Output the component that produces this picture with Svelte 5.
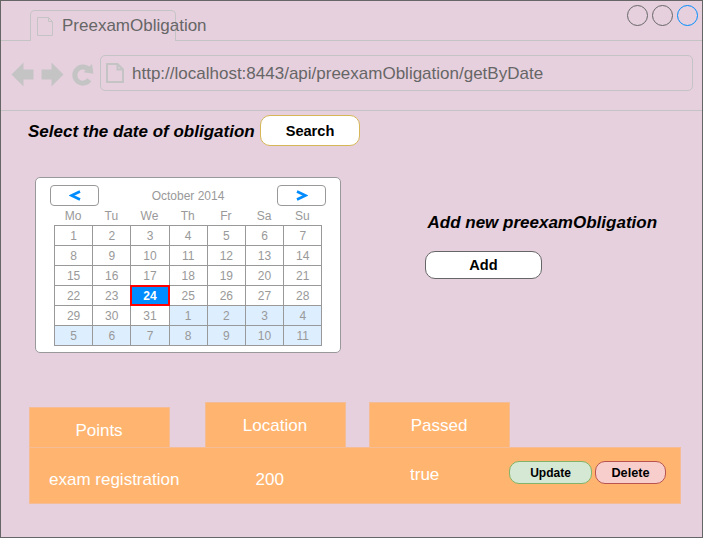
<script>
  const weekdays = ['Mo', 'Tu', 'We', 'Th', 'Fr', 'Sa', 'Su'];
  const days = Array.from({ length: 42 }, (_, i) => ({
    label: i < 31 ? i + 1 : i - 30,
    next: i >= 31,
    selected: i === 23
  }));
</script>

<div class="window">
  <header class="tabs">
    <div class="lead"></div>
    <div class="tab">
      <svg class="tab-icon" width="18" height="20" viewBox="0 0 18 20">
        <path d="M1.5 1.5H12.5L16.5 5.5V19.5H1.5ZM12.5 1.5V5.5H16.5" />
      </svg>
      <span>PreexamObligation</span>
    </div>
    <div class="controls">
      <i></i><i></i><i class="blue"></i>
    </div>
  </header>

  <nav class="toolbar">
    <svg class="nav-icons" width="99" height="36" viewBox="0 0 99 36">
      <path d="M10.5 19.5L22.5 7.5V14.5H32.5V24.5H22.5V31.5Z" />
      <path d="M62.5 19.5L50.5 7.5V14.5H40.5V24.5H50.5V31.5Z" />
      <path class="reload" d="M87.6 14.6A8 8 0 1 0 88.3 24.8" />
      <path d="M91 9L92.500 18.800L82.500 17.300Z" />
    </svg>
    <div class="address">
      <svg width="20" height="22" viewBox="0 0 20 22">
        <path d="M2 2H12.5L18 7.5V20H2ZM12.5 2V7.5H18" />
      </svg>
      <span>http://localhost:8443/api/preexamObligation/getByDate</span>
    </div>
  </nav>

  <main>
    <div class="search-row">
      <span class="heading">Select the date of obligation</span>
      <button class="search">Search</button>
    </div>

    <div class="middle">
      <section class="calendar">
        <div class="month">
          <button><svg width="12" height="12" viewBox="0 0 12 12"><path d="M11 1.5L2.5 5.5L11 9.5" /></svg></button>
          <span>October 2014</span>
          <button><svg width="12" height="12" viewBox="0 0 12 12"><path d="M1 1.5L9.5 5.5L1 9.5" /></svg></button>
        </div>
        <div class="weekdays">
          {#each weekdays as day}<span>{day}</span>{/each}
        </div>
        <div class="days">
          {#each days as day}
            <span class:next={day.next} class:selected={day.selected}>{day.label}</span>
          {/each}
        </div>
      </section>

      <section class="add">
        <span class="heading">Add new preexamObligation</span>
        <button>Add</button>
      </section>
    </div>

    <section class="table">
      <div class="heads">
        <div class="head points">Points</div>
        <div class="head location">Location</div>
        <div class="head passed">Passed</div>
      </div>
      <div class="record">
        <span class="name">exam registration</span>
        <span class="place">200</span>
        <span class="state">true</span>
        <button class="update">Update</button>
        <button class="delete">Delete</button>
      </div>
    </section>
  </main>
</div>

<style>
  .window {
    box-sizing: border-box;
    width: 703px;
    height: 538px;
    border: 1px solid #666;
    background: #e6d0de;
    font-family: "Liberation Sans", Arial, sans-serif;
    font-size: 17px;
    overflow: hidden;
    white-space: nowrap;
  }
  .window * { box-sizing: border-box; }
  svg { display: block; flex: none; }
  button {
    font-family: inherit;
    font-weight: bold;
    font-size: 14.6px;
    padding: 0;
    color: #000;
    background: #fff;
    border: 1px solid #666;
    border-radius: 10px;
    display: flex;
    align-items: center;
    justify-content: center;
    flex: none;
  }
  .tabs { display: flex; height: 40px; }
  .lead { width: 29px; border-bottom: 1px solid #c4c4c4; }
  .tab {
    display: flex;
    width: 146px;
    margin-top: 9px;
    border: 1px solid #c4c4c4;
    border-bottom: 0;
    border-radius: 5px 5px 0 0;
    color: #666;
    line-height: 30px;
  }
  .tab-icon { margin: 5px 8px 0 5px; }
  .tab-icon path { fill: none; stroke: #c4c4c4; }
  .controls {
    flex: 1;
    display: flex;
    justify-content: flex-end;
    gap: 4px;
    padding: 4px 4px 0 0;
    border-bottom: 1px solid #c4c4c4;
  }
  .controls i { width: 21px; height: 21px; border: 1px solid #666; border-radius: 50%; }
  .controls .blue { border-color: #008cff; }

  .toolbar { display: flex; height: 70px; padding-top: 14px; border-bottom: 1px solid #c4c4c4; }
  .nav-icons path { fill: #c4c4c4; }
  .nav-icons .reload { fill: none; stroke: #c4c4c4; stroke-width: 5; }
  .address {
    display: flex;
    width: 593px;
    height: 36px;
    border: 1px solid #c4c4c4;
    border-radius: 5px;
    color: #666;
    line-height: 35px;
  }
  .address svg { margin: 6px 7px 0 4px; }
  .address path { fill: none; stroke: #c4c4c4; stroke-width: 2; }

  .heading { font-weight: bold; font-style: italic; color: #000; }
  .search-row { display: flex; padding: 4px 0 0 27px; }
  .search-row .heading { width: 232px; height: 31px; line-height: 33px; }
  .search { width: 100px; height: 31px; border-color: #d6b656; }

  .middle { display: flex; padding: 31px 0 0 34px; }
  .calendar {
    width: 306px;
    height: 176px;
    background: #fff;
    border: 1px solid #999;
    border-radius: 5px;
    color: #999;
    font-size: 12px;
  }
  .month { display: flex; justify-content: space-between; height: 28px; padding: 7px 14px 0; line-height: 23px; }
  .month button { width: 49px; height: 21px; border-color: #999; border-radius: 4px; }
  .month path { fill: none; stroke: #008cff; stroke-width: 2.6; }
  .weekdays { display: grid; grid-template-columns: repeat(7, 38.2px); margin-left: 18px; line-height: 20px; text-align: center; }
  .days {
    display: grid;
    grid-template-columns: repeat(7, 38.2px);
    grid-auto-rows: 20px;
    width: 268.4px;
    height: 121px;
    margin: -1px 0 0 18px;
    border-top: 1px solid #999;
    border-left: 1px solid #999;
    line-height: 20px;
    text-align: center;
  }
  .days span { border-right: 1px solid #999; border-bottom: 1px solid #999; }
  .days .next { background: #def; }
  .days .selected {
    position: relative;
    margin: -1px 0 0 -1px;
    border: 2px solid #f00;
    background: #008cff;
    color: #fff;
    font-weight: bold;
    line-height: 18px;
  }

  .add { padding: 36px 0 0 84px; }
  .add .heading { display: block; margin-left: 2.5px; line-height: 20px; }
  .add button { width: 117px; height: 28px; margin-top: 18px; }

  .table { width: 652px; margin: 49px 0 0 28px; color: #fff; }
  .heads { display: flex; align-items: flex-end; height: 45px; }
  .head {
    width: 141px;
    height: 45px;
    padding-right: 1px;
    background: #ffb570;
    border: 1px solid #f5bd96;
    border-bottom: 0;
    text-align: center;
    line-height: 45px;
  }
  .points { height: 40px; }
  .location { margin-left: 35px; }
  .passed { margin-left: 23px; }
  .record {
    display: flex;
    align-items: flex-start;
    height: 57px;
    padding: 13px 0 0 19px;
    background: #ffb570;
    border: 1px solid #f5bd96;
    line-height: 20px;
  }
  .record .name { width: 206.5px; padding-top: 9px; }
  .record .place { width: 154.5px; padding-top: 9px; }
  .record .state { width: 99px; padding-top: 4px; }
  .record button { height: 23px; font-size: 12px; }
  .record .update { width: 83px; background: #d5e8d4; border-color: #82b366; }
  .record .delete { width: 71px; margin-left: 3px; font-size: 12.7px; background: #f8cecc; border-color: #b85450; }
</style>
